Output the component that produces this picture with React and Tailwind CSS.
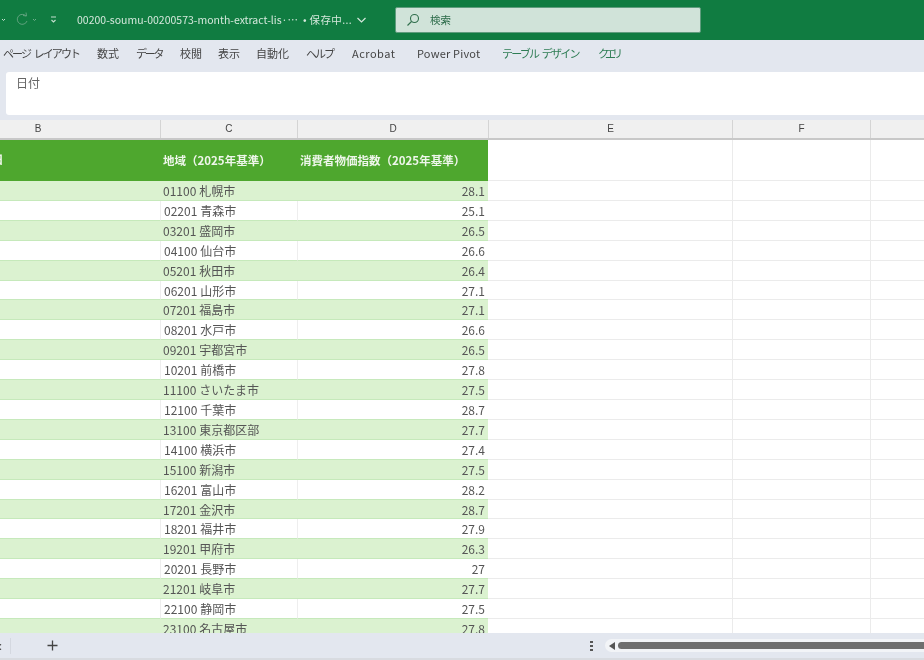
import React from "react";

const rows = [
  ["01100", "札幌市", "28.1"], ["02201", "青森市", "25.1"], ["03201", "盛岡市", "26.5"], ["04100", "仙台市", "26.6"],
  ["05201", "秋田市", "26.4"], ["06201", "山形市", "27.1"], ["07201", "福島市", "27.1"], ["08201", "水戸市", "26.6"],
  ["09201", "宇都宮市", "26.5"], ["10201", "前橋市", "27.8"], ["11100", "さいたま市", "27.5"], ["12100", "千葉市", "28.7"],
  ["13100", "東京都区部", "27.7"], ["14100", "横浜市", "27.4"], ["15100", "新潟市", "27.5"], ["16201", "富山市", "28.2"],
  ["17201", "金沢市", "28.7"], ["18201", "福井市", "27.9"], ["19201", "甲府市", "26.3"], ["20201", "長野市", "27"],
  ["21201", "岐阜市", "27.7"], ["22100", "静岡市", "27.5"], ["23100", "名古屋市", "27.8"],
];

const tabs = [
  ["ページ レイアウト", "w-[94px] tracking-[-1.9px] [word-spacing:3px]", "text-[#444]"], ["数式", "w-[39px]", "text-[#444]"], ["データ", "w-[44px] tracking-[-2.3px]", "text-[#444]"],
  ["校閲", "w-[38px]", "text-[#444]"], ["表示", "w-[38px]", "text-[#444]"], ["自動化", "w-[50px]", "text-[#444]"],
  ["ヘルプ", "w-[46px] tracking-[-2px]", "text-[#444]"], ["Acrobat", "w-[65px] tracking-[0.5px]", "text-[#444]"], ["Power Pivot", "w-[85px] tracking-[0.2px]", "text-[#444]"],
  ["テーブル デザイン", "w-[96px] tracking-[-1.8px] [word-spacing:3px]", "text-[#2f7d55]"], ["クエリ", "w-[40px] tracking-[-4px]", "text-[#2f7d55]"],
];

const Row = ({ code, city, value, odd }) => (
  <div className="flex h-[19.92px] shrink-0">
    <div className={`w-[159.5px] border-b border-[#c6e9bb] ${odd ? "bg-[#dbf2d0]" : "bg-white"}`} />
    <div className={`flex w-[137.5px] gap-[3px] pl-[3.5px] leading-[19px] border-b border-[#c6e9bb] ${odd ? "bg-[#dbf2d0]" : "bg-white border-l border-l-[#eee]"}`}><span>{code}</span><span>{city}</span></div>
    <div className={`w-[191px] pr-[3px] text-right leading-[19px] border-b border-[#c6e9bb] ${odd ? "bg-[#dbf2d0]" : "bg-white border-l border-l-[#eee]"}`}>{value}</div>
    <div className="w-[244px] border-b border-[#ebebeb] bg-white" />
    <div className="w-[138px] border-b border-l border-[#ebebeb] bg-white" />
    <div className="flex-1 border-b border-l border-[#ebebeb] bg-white" />
  </div>
);

export default function App() {
  return (
    <div className="flex h-[660px] w-[924px] flex-col overflow-hidden bg-white text-[12px] text-[#555] blur-[0.4px] font-['Noto_Sans_CJK_JP','Liberation_Sans',sans-serif]">
      <div className="flex h-[40px] shrink-0 items-center bg-[#107c41] text-[10.5px] text-[#d5e8dc]">
        <svg width="60" height="40" viewBox="0 0 60 40" className="shrink-0" fill="none" stroke="#c5e0d0" strokeWidth="1">
          <path d="M2 19l1.5 1.5L5 19" />
          <path d="M26 16a5 5 0 1 0 1 5M23 15.5l3.5.5-.5-3.5" stroke="#5fa27d" />
          <path d="M33 19l1.5 1.5L36 19" stroke="#6fae8c" />
          <path d="M51 17h5M51.5 20l2 2 2-2" strokeWidth="1.1" />
        </svg>
        <span className="ml-[17px] w-[221px] shrink-0 truncate whitespace-nowrap">00200-soumu-00200573-month-extract-lis···</span>
        <span className="ml-[5px] whitespace-nowrap tracking-[0.35px]">• 保存中...</span>
        <svg width="9" height="6" viewBox="0 0 9 6" className="ml-[5px]" fill="none" stroke="#d5e8dc" strokeWidth="1.2"><path d="M0.5 1l4 4 4-4" /></svg>
        <div className="ml-[29px] flex h-[26px] w-[306px] items-center rounded-[2px] border border-[#5f9c7d] bg-[#d0e3d9] text-[#2a6a48]">
          <svg width="14" height="14" viewBox="0 0 14 14" className="ml-[10px]" fill="none" stroke="#2f6e4c" strokeWidth="1.1"><circle cx="8.5" cy="5.5" r="4" /><path d="M5.5 8.5L1.5 12.5" /></svg>
          <span className="ml-[10px]">検索</span>
        </div>
      </div>
      <div className="flex h-[32px] shrink-0 items-center bg-[#e3e7ef] pb-[5px] pl-[3px] text-[11px]">
        {tabs.map(([t, w, c]) => (
          <span key={t} className={`${w} ${c} shrink-0 whitespace-nowrap`}>{t}</span>
        ))}
      </div>
      <div className="h-[48px] shrink-0 bg-[#e3e7ef] pl-[6px]">
        <div className="h-[43px] rounded-l-[3px] bg-white pl-[10px] pt-[2px] text-[#666]">日付</div>
      </div>
      <div className="flex h-[20px] shrink-0 border-b-2 border-[#c8c8c8] bg-[#f0f0f0] text-center text-[10px] leading-[17px] text-[#444] font-['Liberation_Sans',sans-serif]">
        <div className="w-[159.5px] pr-[118px] text-right">B</div>
        <div className="w-[137.5px] border-l border-[#d4d4d4]">C</div>
        <div className="w-[191px] border-l border-[#d4d4d4]">D</div>
        <div className="w-[244px] border-l border-[#d4d4d4]">E</div>
        <div className="w-[138px] border-l border-[#d4d4d4]">F</div>
        <div className="flex-1 border-l border-[#d4d4d4]" />
      </div>
      <div className="flex h-[41px] shrink-0">
        <div className="flex w-[488px] items-center bg-[#4ea72e] text-[11.5px] font-semibold text-[#eef6ea]">
          <div className="relative h-full w-[159.5px]"><span className="absolute left-[-8px] top-[11px]">日</span></div>
          <div className="w-[137.5px] pl-[3.5px] whitespace-nowrap">地域（2025年基準）</div>
          <div className="w-[191px] pl-[3px] whitespace-nowrap">消費者物価指数（2025年基準）</div>
        </div>
        <div className="w-[244px] border-b border-[#ebebeb]" />
        <div className="w-[138px] border-b border-l border-[#ebebeb]" />
        <div className="flex-1 border-b border-l border-[#ebebeb]" />
      </div>
      <div className="flex min-h-0 flex-1 flex-col overflow-hidden">
        {rows.map(([c, n, v], i) => <Row key={c} code={c} city={n} value={v} odd={i % 2 === 0} />)}
      </div>
      <div className="flex h-[27px] shrink-0 items-center border-b-2 border-[#d8dbe0] bg-[#e3e7ef] text-[#444]">
        <span className="ml-[-1px] text-[11px] leading-none">:</span>
        <div className="ml-[8px] h-[16px] w-px bg-[#d4d8e0]" />
        <svg width="11" height="11" viewBox="0 0 11 11" className="ml-[36px]" stroke="#444" strokeWidth="1.3"><path d="M5.5 0.5v10M0.5 5.5h10" /></svg>
        <svg width="3" height="10" viewBox="0 0 3 10" className="ml-[532px]" fill="#555"><rect y="0" width="3" height="2" /><rect y="4" width="3" height="2" /><rect y="8" width="3" height="2" /></svg>
        <div className="ml-[12px] flex h-[13px] flex-1 items-center rounded-l-full bg-[#f2f4f7] pl-[4px]">
          <svg width="7" height="8" viewBox="0 0 7 8" fill="#555"><path d="M6 0v8L0 4z" /></svg>
          <div className="ml-[2px] h-[7px] flex-1 rounded-l-full bg-[#6e6e6e]" />
        </div>
      </div>
    </div>
  );
}
